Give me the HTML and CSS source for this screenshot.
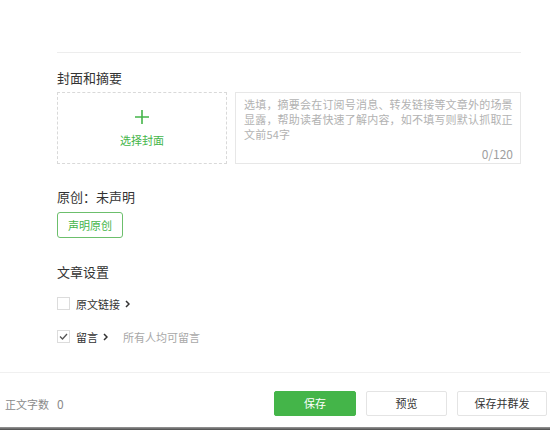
FILE: index.html
```html
<!DOCTYPE html>
<html lang="zh-CN">
<head>
<meta charset="utf-8">
<title>文章设置</title>
<link rel="stylesheet" href="styles.css">
</head>
<body>
<div class="main">
  <section class="cover-section">
    <h3 class="h">封面和摘要</h3>
    <div class="cover-row">
      <div class="cover-pick">
        <svg class="plus" width="16" height="16" viewBox="0 0 16 16"><path d="M8 1V15M1 8H15" stroke="#44b549" stroke-width="1.6" fill="none"/></svg>
        <span class="cover-label">选择封面</span>
      </div>
      <div class="summary">
        <div class="placeholder">选填，摘要会在订阅号消息、转发链接等文章外的场景<br>显露，帮助读者快速了解内容，如不填写则默认抓取正<br>文前54字</div>
        <div class="count">0/120</div>
      </div>
    </div>
  </section>

  <h3 class="h original">原创：未声明</h3>
  <button class="btn-declare">声明原创</button>

  <h3 class="h settings">文章设置</h3>
  <div class="check-row">
    <span class="box"></span>
    <span class="label">原文链接</span>
    <svg class="chev" width="5" height="8" viewBox="0 0 5 8"><path d="M1 1L4 4L1 7" stroke="#333" stroke-width="1.5" fill="none"/></svg>
  </div>
  <div class="check-row">
    <span class="box checked"><svg width="11" height="11" viewBox="0 0 11 11"><path d="M2 5.5L4.5 8L9 3" stroke="#555" stroke-width="1.3" fill="none"/></svg></span>
    <span class="label">留言</span>
    <svg class="chev" width="5" height="8" viewBox="0 0 5 8"><path d="M1 1L4 4L1 7" stroke="#333" stroke-width="1.5" fill="none"/></svg>
    <span class="hint">所有人均可留言</span>
  </div>
</div>
<footer class="footer">
  <div class="wordcount">正文字数<span class="num">0</span></div>
  <div class="actions">
    <button class="btn btn-primary w-save">保存</button>
    <button class="btn w-preview">预览</button>
    <button class="btn w-send">保存并群发</button>
  </div>
</footer>
<div class="bottom-bar"></div>
</body>
</html>
```

FILE: styles.css
```css
html, body {
  margin: 0;
  padding: 0;
}
body {
  width: 550px;
  height: 430px;
  display: flex;
  flex-direction: column;
  background: #fff;
  font-family: "Noto Sans CJK SC", "Noto Sans", sans-serif;
  color: #333;
  overflow: hidden;
}
.main {
  flex: 1;
  padding: 52px 29px 0 57px;
  display: flex;
  flex-direction: column;
  align-items: flex-start;
}
.cover-section {
  align-self: stretch;
  border-top: 1px solid #ededed;
  padding-top: 16px;
}
.h {
  margin: 0;
  font-size: 13px;
  line-height: 18px;
  font-weight: 400;
  color: #333;
}
.cover-row {
  display: flex;
  gap: 8px;
  margin-top: 5px;
  height: 72px;
}
.cover-pick {
  width: 170px;
  box-sizing: border-box;
  border: 1px dashed #d9d9d9;
  display: flex;
  flex-direction: column;
  align-items: center;
  justify-content: center;
}
.plus {
  display: block;
  margin-bottom: 8px;
}
.cover-label {
  font-size: 11px;
  line-height: 14px;
  color: #44b549;
}
.summary {
  flex: 1;
  box-sizing: border-box;
  border: 1px solid #e7e7e7;
  padding: 4px 6px 2px 8px;
  display: flex;
  flex-direction: column;
  justify-content: space-between;
}
.placeholder {
  font-size: 11px;
  line-height: 15px;
  letter-spacing: 0.2px;
  color: #b2b2b2;
  white-space: nowrap;
}
.count {
  text-align: right;
  font-size: 12px;
  line-height: 15px;
  color: #a0a0a0;
  padding-right: 1px;
}
.original {
  margin-top: 24px;
}
.btn-declare {
  margin-top: 6px;
  width: 66px;
  height: 26px;
  box-sizing: border-box;
  border: 1px solid #6cbf6c;
  border-radius: 3px;
  background: #fff;
  color: #44b549;
  font-family: inherit;
  font-size: 11px;
  line-height: 24px;
  padding: 0;
  text-align: center;
}
.settings {
  margin-top: 25px;
}
.check-row {
  display: flex;
  align-items: center;
  height: 13px;
  margin-top: 16px;
}
.check-row + .check-row {
  margin-top: 20px;
}
.box {
  width: 13px;
  height: 13px;
  box-sizing: border-box;
  border: 1px solid #dcdcdc;
  background: #fff;
  display: flex;
  align-items: center;
  justify-content: center;
  margin-right: 6px;
}
.label {
  font-size: 11px;
  line-height: 14px;
  color: #333;
}
.chev {
  display: block;
  margin-left: 5px;
}
.hint {
  margin-left: 15px;
  font-size: 11px;
  line-height: 14px;
  color: #a8a8a8;
}
.footer {
  height: 55px;
  box-sizing: border-box;
  border-top: 1px solid #f0f0f0;
  padding: 6px 3px 0 5px;
  display: flex;
  align-items: center;
}
.wordcount {
  font-size: 11px;
  color: #8a8a8a;
}
.num {
  margin-left: 8px;
  font-size: 12px;
}
.actions {
  margin-left: auto;
  display: flex;
  gap: 10px;
}
.btn {
  height: 25px;
  box-sizing: border-box;
  border: 1px solid #e4e4e4;
  border-radius: 2px;
  background: #fff;
  color: #333;
  font-family: inherit;
  font-size: 11px;
  padding: 0;
  text-align: center;
}
.btn-primary {
  background: #44b549;
  border-color: #44b549;
  color: #fff;
}
.w-save { width: 82px; }
.w-preview { width: 81px; }
.w-send { width: 90px; }
.bottom-bar {
  height: 3px;
  background: linear-gradient(to bottom, #9a9a9a, #4a4a4a);
}
```
